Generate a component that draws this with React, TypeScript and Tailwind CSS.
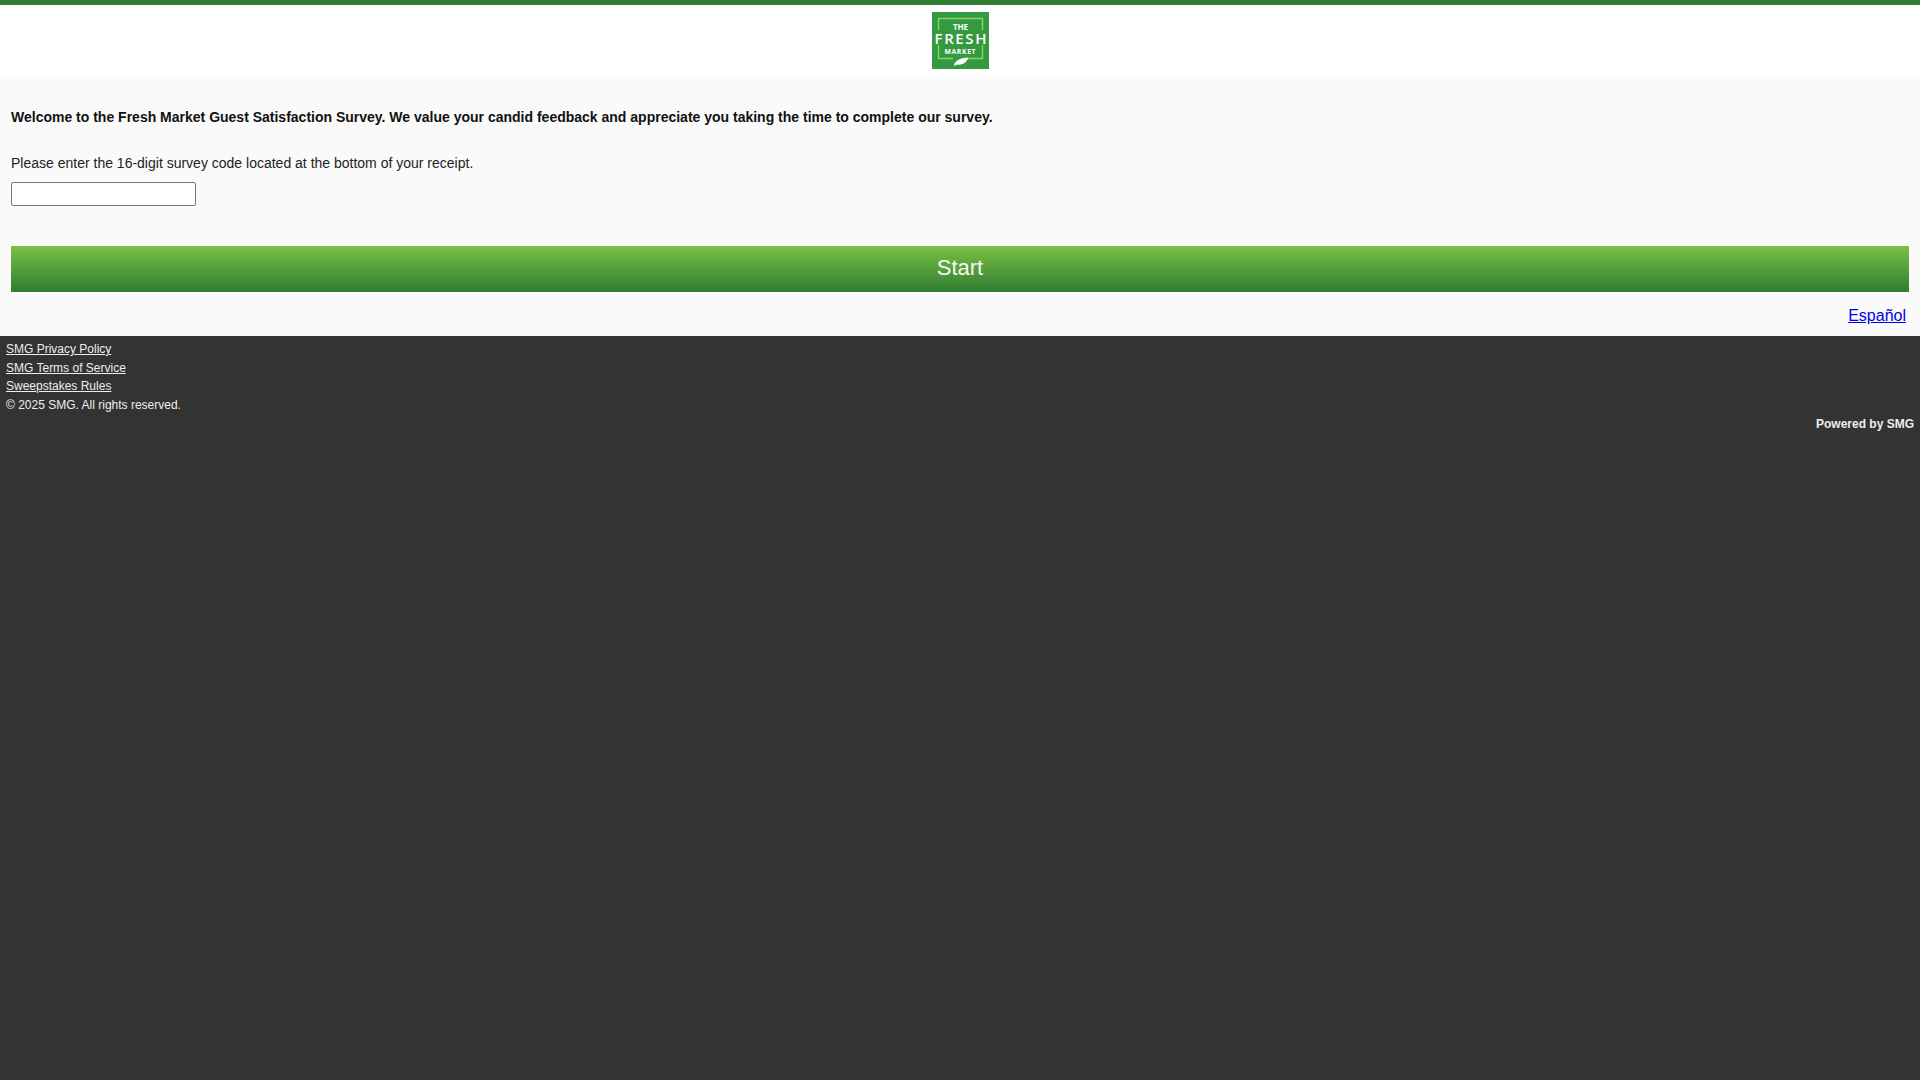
export default function App() {
  return (
    <div className="min-h-[1080px] bg-[#333333] font-['Liberation_Sans',Arial,sans-serif]">
      <header className="flex h-[76px] justify-center border-t-[5px] border-[#2e7d32] bg-white pt-[7px]">
        <svg width="57" height="57" viewBox="0 0 57 57" className="block">
          <rect width="57" height="57" fill="#339a41" />
          <path d="M6.5 18V6.5H50.5V18" fill="none" stroke="#8ccf6a" strokeWidth="1.4" />
          <path d="M6.5 33V46.5H21M36 46.5H50.5V33" fill="none" stroke="#8ccf6a" strokeWidth="1.4" />
          <text x="28.5" y="18" textAnchor="middle" textLength="15" fill="#fff" fontSize="8" fontWeight="700" fontFamily="Open Sans">THE</text>
          <text x="28.5" y="32" textAnchor="middle" textLength="52" fill="#fff" fontSize="15" fontWeight="600" fontFamily="Open Sans">FRESH</text>
          <text x="28" y="41.5" textAnchor="middle" textLength="31" fill="#fff" fontSize="6.8" fontWeight="700" fontFamily="Open Sans">MARKET</text>
          <path d="M22 54C22 49 28 46 36.5 45.5C35 50 31 53.5 25 52.5Z" fill="#fff" />
        </svg>
      </header>
      <main className="h-[260px] bg-[#fafafa] px-[11px] pt-[33px]">
        <p className="text-[14px] leading-[16px] font-bold text-[#111111]">
          Welcome to the Fresh Market Guest Satisfaction Survey. We value your candid feedback and appreciate you taking the time to complete our survey.
        </p>
        <label htmlFor="code" className="mt-[30px] block text-[14px] leading-[16px] text-[#222222]">
          Please enter the 16-digit survey code located at the bottom of your receipt.
        </label>
        <input id="code" type="text" className="mt-[11px] block h-[24px] w-[185px] rounded-[2px] border border-[#767676] bg-white" />
        <button className="mt-[40px] block h-[46px] w-full bg-gradient-to-b from-[#7ac143] to-[#2e7d32] pb-[4px] text-center text-[22px] text-[#f4f8f0]">
          Start
        </button>
        <div className="mt-[15px] pr-[3px] text-right text-[16px] leading-[18px]">
          <a href="#" className="text-[#0000ee] underline">Español</a>
        </div>
      </main>
      <footer className="px-[6px] pt-[4px] text-[12px] leading-[18.7px] text-[#eeeeee]">
        <a href="#" className="block underline">SMG Privacy Policy</a>
        <a href="#" className="block underline">SMG Terms of Service</a>
        <a href="#" className="block underline">Sweepstakes Rules</a>
        <p>© 2025 SMG. All rights reserved.</p>
        <p className="text-right font-bold">Powered by SMG</p>
      </footer>
    </div>
  );
}
